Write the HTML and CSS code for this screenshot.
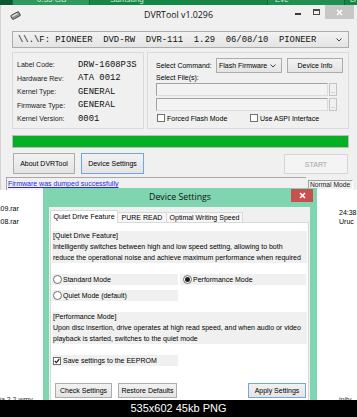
FILE: index.html
```html
<!DOCTYPE html>
<html lang="en">
  <head>
    <meta charset="UTF-8" />
    <meta name="viewport" content="width=device-width, initial-scale=1.0" />
    <title>DVRTool v1.0296</title>
    <link rel="stylesheet" href="styles.css">
  </head>
  <body>
    <div class="screen">
      <div class="taskbar">
        <span class="task dark"></span>
        <span class="task tile"><em>0.55 GB</em></span>
        <span class="task mid"><em>Samsung</em></span>
        <span class="task eve"><em>Eve</em></span>
        <span class="task last"><em>cl</em></span>
      </div>

      <div class="window">
        <div class="titlebar">
          <svg class="app-icon" width="11" height="9" viewBox="0 0 11 9">
            <g transform="rotate(-28 5.5 4.5)">
              <rect x="1" y="2.3" width="9" height="4.6" rx="1" fill="#8f8f8f" stroke="#3a3a3a" stroke-width="0.8" />
              <rect x="2" y="3.1" width="6" height="1.3" fill="#e6e6e6" />
            </g>
          </svg>
          <div class="title">DVRTool v1.0296</div>
          <div class="controls">
            <span class="min"></span>
            <span class="max"></span>
            <span class="close">
              <svg width="7" height="7" viewBox="0 0 7 7"><path d="M1 1L6 6M6 1L1 6" stroke="#fff" stroke-width="1.4" /></svg>
            </span>
          </div>
        </div>

        <div class="client">
          <div class="drive-select">
            <span class="mono">\\.\F: PIONEER  DVD-RW  DVR-111  1.29  06/08/10  PIONEER</span>
            <svg class="chevron" width="6" height="4" viewBox="0 0 6 4"><path d="M0.5 0.5L3 3L5.5 0.5" fill="none" stroke="#444" /></svg>
          </div>

          <div class="groups">
            <div class="group info">
              <div class="info-row"><span class="info-label">Label Code:</span><span class="mono">DRW-1608P3S</span></div>
              <div class="info-row"><span class="info-label">Hardware Rev:</span><span class="mono">ATA 0012</span></div>
              <div class="info-row"><span class="info-label">Kernel Type:</span><span class="mono">GENERAL</span></div>
              <div class="info-row"><span class="info-label">Firmware Type:</span><span class="mono">GENERAL</span></div>
              <div class="info-row"><span class="info-label">Kernel Version:</span><span class="mono">0001</span></div>
            </div>

            <div class="group command">
              <div class="cmd-row">
                <span class="cmd-label">Select Command:</span>
                <div class="combo">
                  <span>Flash Firmware</span>
                  <svg class="chevron" width="6" height="4" viewBox="0 0 6 4"><path d="M0.5 0.5L3 3L5.5 0.5" fill="none" stroke="#444" /></svg>
                </div>
                <button class="btn info-btn">Device Info</button>
              </div>
              <div class="files-label">Select File(s):</div>
              <div class="file-row"><div class="input"></div><button class="dots">...</button></div>
              <div class="file-row"><div class="input"></div><button class="dots">...</button></div>
              <div class="check-row">
                <label class="check forced"><span class="box"></span>Forced Flash Mode</label>
                <label class="check"><span class="box"></span>Use ASPI Interface</label>
              </div>
            </div>
          </div>

          <div class="progress"><div class="progress-fill" style="width: 100%"></div></div>

          <div class="actions">
            <button class="btn about">About DVRTool</button>
            <button class="btn focused settings">Device Settings</button>
            <button class="btn disabled start">START</button>
          </div>
        </div>

        <div class="statusbar">
          <div class="status-main"><span class="status-text">Firmware was dumped successfully</span></div>
          <div class="status-mode">Normal Mode</div>
        </div>
      </div>

      <div class="explorer">
        <div class="ex-left">
          <div class="ex-item">c09.rar</div>
          <div class="ex-item">c08.rar</div>
          <div class="ex-item ex-bottom">0a.2.2.wmv</div>
        </div>
        <div class="ex-right">
          <div class="ex-item">24:38</div>
          <div class="ex-item">Uruc</div>
          <div class="ex-item ex-bottom">ipity.. M<span class="scroll-up"></span></div>
        </div>
      </div>

      <div class="dialog">
        <div class="dialog-title">
          <span></span>
          <div class="dialog-name">Device Settings</div>
          <span class="dialog-close">
            <svg width="7" height="7" viewBox="0 0 7 7"><path d="M1 1L6 6M6 1L1 6" stroke="#fff" stroke-width="1.6" /></svg>
          </span>
        </div>
        <div class="dialog-client">
          <div class="tabs">
            <div class="tab selected">Quiet Drive Feature</div>
            <div class="tab pure">PURE READ</div>
            <div class="tab optimal">Optimal Writing Speed</div>
          </div>
          <div class="panel">
            <div class="note">
              <div class="note-title">[Quiet Drive Feature]</div>
              <div class="note-text">Intelligently switches between high and low speed setting, allowing to both<br>reduce the operational noise and achieve maximum performance when required</div>
            </div>

            <div class="opt-row first">
              <label class="opt"><span class="radio"></span>Standard Mode</label>
              <label class="opt right"><span class="radio on"></span>Performance Mode</label>
            </div>
            <div class="opt-row">
              <label class="opt"><span class="radio"></span>Quiet Mode (default)</label>
            </div>

            <div class="note second">
              <div class="note-title">[Performance Mode]</div>
              <div class="note-text">Upon disc insertion, drive operates at high read speed, and when audio or video<br>playback is started, switches to the quiet mode</div>
            </div>

            <label class="opt save">
              <span class="box checked">
                <svg width="6" height="6" viewBox="0 0 6 6"><path d="M0.8 3L2.3 4.6L5.3 1" fill="none" stroke="#222" stroke-width="1.2" /></svg>
              </span>Save settings to the EEPROM
            </label>

            <div class="dialog-actions">
              <button class="btn check-btn">Check Settings</button>
              <button class="btn restore-btn">Restore Defaults</button>
              <button class="btn focused apply-btn">Apply Settings</button>
            </div>
          </div>
        </div>
      </div>

      <div class="caption">535x602 45kb PNG</div>
    </div>
  </body>
</html>
```

FILE: styles.css
```css
* {
  margin: 0;
  padding: 0;
  box-sizing: border-box;
}

body {
  width: 357px;
  height: 417px;
  overflow: hidden;
  background: #fff;
  font-family: "Liberation Sans", Arial, sans-serif;
  font-size: 7px;
  color: #000;
}

.screen {
  position: relative;
  width: 357px;
  height: 417px;
  overflow: hidden;
  display: flex;
  flex-direction: column;
}

/* green strip of the desktop behind */
.taskbar {
  height: 5px;
  flex: none;
  display: flex;
  background: #148747;
  overflow: hidden;
}
.task {
  height: 5px;
  flex: none;
  border-right: 1px solid #0c6a37;
  color: #d4f0de;
  font-size: 8px;
}
.task em {
  display: block;
  font-style: normal;
  line-height: 8px;
  margin-top: -4px;
}
.task.dark {
  width: 13px;
  background: #0c5a30;
}
.task.tile {
  width: 77px;
  padding-left: 24px;
  background: #2c9a5d;
}
.task.mid {
  width: 178px;
  padding-left: 20px;
}
.task.eve {
  width: 77px;
  padding-left: 7px;
  background: #1f9052;
}
.task.last {
  width: 12px;
  padding-left: 5px;
  border-right: 0;
}

/* main DVRTool window */
.window {
  height: 185px;
  flex: none;
  background: #f0f0f0;
  border-left: 1px solid #d2d2d2;
  padding: 0 4px 0 3px;
  display: flex;
  flex-direction: column;
}

.titlebar {
  height: 23px;
  flex: none;
  display: grid;
  grid-template-columns: 1fr auto 1fr;
  align-items: start;
}
.app-icon {
  margin: 6px 0 0 6px;
}
.title {
  font-family: "Open Sans", "Liberation Sans", sans-serif;
  font-size: 8.8px;
  line-height: 11px;
  padding-top: 5px;
  color: #111;
}
.controls {
  justify-self: end;
  display: flex;
  align-items: flex-start;
}
.min {
  width: 6px;
  height: 2px;
  margin: 8px 12px 0 0;
  background: #3a3a3a;
}
.max {
  width: 7px;
  height: 6px;
  margin: 4px 5px 0 0;
  border: 1px solid #4a4a4a;
  border-top-width: 2px;
}
.close {
  width: 29px;
  height: 14px;
  margin-right: -1px;
  background: #c7c7c7;
  display: flex;
  align-items: center;
  justify-content: center;
}

.client {
  padding: 3px 4px 0 8px;
  display: flex;
  flex-direction: column;
}

.mono {
  font-family: "Liberation Mono", "Courier New", monospace;
  font-size: 8.9px;
  white-space: pre;
  color: #111;
}

.drive-select {
  height: 17px;
  border: 1px solid #acacac;
  background: linear-gradient(#f2f2f2, #e4e4e4);
  display: flex;
  align-items: center;
  padding: 0 6px 0 5px;
}
.drive-select .chevron {
  margin-left: auto;
}

.groups {
  margin-top: 4px;
  height: 77px;
  display: flex;
  gap: 3px;
}
.group {
  border: 1px solid #d9d9d9;
}
.info {
  width: 132px;
  padding: 5px 0 0 4px;
}
.info-row {
  height: 13.5px;
  display: flex;
  align-items: center;
}
.info-label {
  width: 61px;
  color: #222;
}

.command {
  flex: 1;
  padding: 5px 0 0 8px;
}
.cmd-row {
  height: 15px;
  display: flex;
  align-items: center;
}
.cmd-label {
  width: 60px;
}
.combo {
  width: 66px;
  height: 15px;
  border: 1px solid #acacac;
  background: linear-gradient(#f2f2f2, #e4e4e4);
  display: flex;
  align-items: center;
  padding: 0 5px 0 2px;
}
.combo .chevron {
  margin-left: auto;
}
.btn {
  font-family: inherit;
  font-size: 7px;
  color: #000;
  border: 1px solid #acacac;
  background: linear-gradient(#f2f2f2, #e4e4e4);
}
.btn.focused {
  border-color: #6ea7e4;
}
.btn.disabled {
  border-color: #d6d6d6;
  background: #f4f4f4;
  color: #a3a3a3;
}
.info-btn {
  width: 56px;
  height: 15px;
  margin-left: 5px;
}

.files-label {
  height: 10px;
  line-height: 10px;
}
.file-row {
  display: flex;
  height: 13px;
  margin-bottom: 2px;
}
.input {
  width: 172px;
  height: 13px;
  border: 1px solid;
  border-color: #a2a2a2 #dcdcdc #dcdcdc #a2a2a2;
  background: #f3f3f3;
}
.dots {
  width: 8px;
  height: 13px;
  margin-left: 1px;
  border: 1px solid #c4c4c4;
  background: #f0f0f0;
  font-family: inherit;
  font-size: 5px;
  color: #777;
  line-height: 14px;
}
.check-row {
  height: 10px;
  display: flex;
  align-items: center;
}
.check {
  display: flex;
  align-items: center;
  margin-left: 1px;
}
.check.forced {
  width: 92px;
}
.box {
  width: 8px;
  height: 8px;
  margin-right: 2px;
  border: 1px solid #707070;
  background: #fff;
  display: flex;
  align-items: center;
  justify-content: center;
}

.progress {
  margin-top: 6px;
  height: 13px;
  border: 1px solid #bcbcbc;
  background: #e6e6e6;
}
.progress-fill {
  height: 100%;
  background: #06b025;
}

.actions {
  margin-top: 5px;
  height: 21px;
  display: flex;
}
.about {
  width: 62px;
  margin-left: 1px;
}
.settings {
  width: 63px;
  margin-left: 6px;
}
.start {
  width: 64px;
  margin-left: auto;
  margin-right: 1px;
  height: 20px;
  margin-top: 1px;
}

.statusbar {
  margin: 3px 0 0 2px;
  height: 13px;
  display: flex;
}
.status-main {
  width: 300px;
  border-top: 1px solid #a8a8a8;
  border-left: 1px solid #a8a8a8;
  padding: 2px 0 0 1px;
}
.status-text {
  color: #2626ee;
  line-height: 8px;
  text-decoration: underline;
}
.status-mode {
  width: 45px;
  height: 10px;
  margin: 3px 0 0 2px;
  border: 1px solid;
  border-color: #a0a0a0 #ffffff #ffffff #a0a0a0;
  font-size: 6.7px;
  line-height: 8px;
  padding-left: 1px;
  color: #222;
}

/* explorer window behind the dialog */
.explorer {
  flex: 1;
  display: flex;
  background: #fff;
}
.ex-left {
  width: 43px;
  padding-top: 12px;
  display: flex;
  flex-direction: column;
  text-indent: -3px;
}
.ex-left .ex-item {
  line-height: 13px;
}
.ex-right {
  margin-left: auto;
  width: 18px;
  padding-top: 18px;
  display: flex;
  flex-direction: column;
  white-space: nowrap;
}
.ex-right .ex-item {
  line-height: 9px;
}
.ex-item.ex-bottom {
  margin-top: auto;
  line-height: 14px;
  margin-bottom: -7px;
  color: #333;
}
.scroll-up {
  display: inline-block;
  width: 6px;
  height: 8px;
  margin-left: 1px;
  border: 1px solid #9a9a9a;
}

/* Device Settings dialog */
.dialog {
  position: absolute;
  left: 43px;
  top: 188px;
  width: 274px;
  height: 229px;
  background: #7fd5b0;
  display: flex;
  flex-direction: column;
}
.dialog-title {
  height: 19px;
  flex: none;
  display: grid;
  grid-template-columns: 1fr auto 1fr;
  align-items: start;
}
.dialog-name {
  font-family: "Open Sans", "Liberation Sans", sans-serif;
  font-size: 8.8px;
  line-height: 19px;
  color: #111;
}
.dialog-close {
  justify-self: end;
  width: 22px;
  height: 13px;
  margin: 1px 4px 0 0;
  background: #c75050;
  display: flex;
  align-items: center;
  justify-content: center;
}
.dialog-client {
  flex: 1;
  margin: 0 7px 0 6px;
  background: #f0f0f0;
  padding: 3px 1px 0 1px;
  display: flex;
  flex-direction: column;
}
.tabs {
  height: 12px;
  flex: none;
  display: flex;
  align-items: flex-end;
}
.tab {
  height: 10px;
  line-height: 9px;
  text-align: center;
  border: 1px solid #d9d9d9;
  border-bottom: 0;
  background: #f6f6f6;
}
.tab.selected {
  height: 13px;
  width: 68px;
  line-height: 12px;
  background: #fff;
  margin-bottom: -1px;
  position: relative;
  z-index: 1;
}
.tab.pure {
  width: 50px;
  margin-left: -1px;
}
.tab.optimal {
  width: 77px;
  margin-left: -1px;
}

.panel {
  flex: 1;
  background: #fff;
  border: 1px solid #d9d9d9;
  padding: 0 1px;
  display: flex;
  flex-direction: column;
}
.note {
  margin-top: 8px;
  height: 32px;
  background: #f0f0f0;
  padding-left: 1px;
  white-space: nowrap;
}
.note.second {
  margin-top: 11px;
}
.note-title {
  line-height: 10px;
}
.note-text {
  margin-top: 1px;
  line-height: 10.5px;
}

.opt-row {
  margin-top: 5px;
  display: flex;
  gap: 2px;
}
.opt-row.first {
  margin-top: 11px;
}
.opt {
  width: 126px;
  height: 11px;
  background: #f0f0f0;
  display: flex;
  align-items: center;
  padding-left: 1px;
}
.opt.right {
  padding-left: 3px;
}
.radio {
  width: 9px;
  height: 9px;
  margin-right: 1px;
  border: 1px solid #707070;
  border-radius: 50%;
  background: #fff;
  display: flex;
  align-items: center;
  justify-content: center;
}
.radio.on::after {
  content: "";
  width: 5px;
  height: 5px;
  border-radius: 50%;
  background: #1c1c1c;
}
.opt.save {
  margin-top: 11px;
}
.opt.save .box {
  margin-right: 2px;
}

.dialog-actions {
  margin-top: 17px;
  display: flex;
}
.dialog-actions .btn {
  height: 15px;
}
.check-btn {
  width: 57px;
  margin-left: 3px;
}
.restore-btn {
  width: 59px;
  margin-left: 6px;
}
.apply-btn {
  width: 58px;
  margin-left: auto;
  margin-right: 1px;
}

/* image viewer caption */
.caption {
  height: 17px;
  flex: none;
  position: relative;
  z-index: 2;
  background: #000;
  color: #fff;
  font-size: 11px;
  line-height: 17px;
  text-align: center;
}
```
